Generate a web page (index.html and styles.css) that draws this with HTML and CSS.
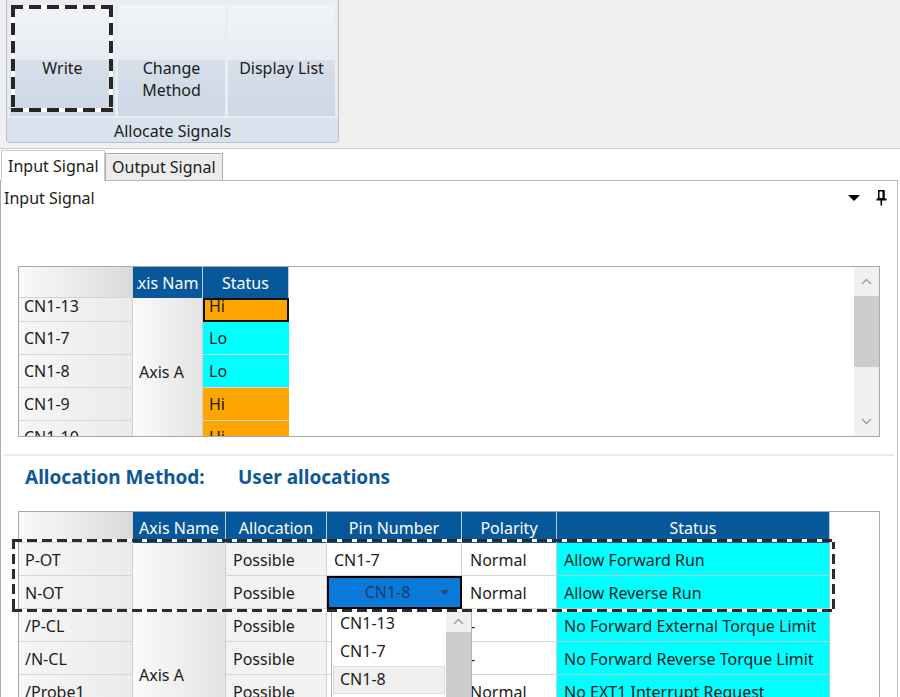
FILE: index.html
```html
<!DOCTYPE html>
<html>
<head>
<meta charset="utf-8">
<link rel="stylesheet" href="styles.css">
</head>
<body>
<div class="ribbon">
  <div class="group">
    <div class="buttons">
      <div class="btn btn-a focused">Write</div>
      <div class="btn">Change<br>Method</div>
      <div class="btn">Display List</div>
    </div>
    <div class="group-label">Allocate Signals</div>
  </div>
</div>

<div class="tabs">
  <div class="tab active">Input Signal</div>
  <div class="tab">Output Signal</div>
</div>

<div class="panel">
  <div class="ptitle">
    <span>Input Signal</span>
    <span class="tools">
      <svg class="tri" width="12" height="7" viewBox="0 0 12 7"><polygon points="0,0 12,0 6,6" fill="#000"/></svg>
      <svg class="pin" width="11" height="16" viewBox="0 0 11 16">
        <rect x="2.75" y="0.75" width="5" height="8" fill="none" stroke="#000" stroke-width="1.5"/>
        <rect x="6.5" y="0" width="2" height="9" fill="#000"/>
        <rect x="0.5" y="8.5" width="10" height="2" fill="#000"/>
        <rect x="4.5" y="10" width="1.6" height="5.5" fill="#000"/>
      </svg>
    </span>
  </div>

  <div class="grid1">
    <div class="g1-main">
      <div class="g1-head">
        <div class="corner"></div>
        <div class="hcell"><div class="clipbox"><span>Axis Name</span></div></div>
        <div class="hcell">Status</div>
      </div>
      <div class="g1-body">
        <div class="g1-grid">
          <div class="rh c1 first"><span>CN1-13</span></div>
          <div class="axis a5">Axis A</div>
          <div class="st c3 hi sel first"><span>Hi</span></div>
          <div class="rh c1"><span>CN1-7</span></div>
          <div class="st c3 lo"><span>Lo</span></div>
          <div class="rh c1"><span>CN1-8</span></div>
          <div class="st c3 lo"><span>Lo</span></div>
          <div class="rh c1"><span>CN1-9</span></div>
          <div class="st c3 hi"><span>Hi</span></div>
          <div class="rh c1"><span>CN1-10</span></div>
          <div class="st c3 hi"><span>Hi</span></div>
        </div>
      </div>
    </div>
    <div class="vscroll">
      <div class="sb-btn"><svg width="11" height="7" viewBox="0 0 11 7"><polyline points="1,6 5.5,1.5 10,6" fill="none" stroke="#9c9c9c" stroke-width="1.4"/></svg></div>
      <div class="sb-thumb"></div>
      <div class="sb-track"></div>
      <div class="sb-btn"><svg width="11" height="7" viewBox="0 0 11 7"><polyline points="1,1 5.5,5.5 10,1" fill="none" stroke="#9c9c9c" stroke-width="1.4"/></svg></div>
    </div>
  </div>

  <div class="sep"></div>

  <div class="method"><span class="m-label">Allocation Method:</span><span>User allocations</span></div>

  <div class="grid2">
    <div class="g2">
      <div class="corner"></div>
      <div class="hcell">Axis Name</div>
      <div class="hcell">Allocation</div>
      <div class="hcell">Pin Number</div>
      <div class="hcell">Polarity</div>
      <div class="hcell">Status</div>

      <div class="rh k1">P-OT</div>
      <div class="axis a8">Axis A</div>
      <div class="cell alloc k3">Possible</div>
      <div class="cell pinc k4">CN1-7</div>
      <div class="cell pol k5">Normal</div>
      <div class="cell stc k6">Allow Forward Run</div>

      <div class="rh k1">N-OT</div>
      <div class="cell alloc k3">Possible</div>
      <div class="cell pinc k4 edit"><span class="edit-val">CN1-8</span><svg class="edit-arrow" width="9" height="5" viewBox="0 0 9 5"><polygon points="0,0 9,0 4.5,5" fill="#1f4e86"/></svg></div>
      <div class="cell pol k5">Normal</div>
      <div class="cell stc k6">Allow Reverse Run</div>

      <div class="rh k1">/P-CL</div>
      <div class="cell alloc k3">Possible</div>
      <div class="cell pinc k4"></div>
      <div class="cell pol k5">-</div>
      <div class="cell stc k6">No Forward External Torque Limit</div>

      <div class="rh k1">/N-CL</div>
      <div class="cell alloc k3">Possible</div>
      <div class="cell pinc k4"></div>
      <div class="cell pol k5">-</div>
      <div class="cell stc k6">No Forward Reverse Torque Limit</div>

      <div class="rh k1">/Probe1</div>
      <div class="cell alloc k3">Possible</div>
      <div class="cell pinc k4"></div>
      <div class="cell pol k5">Normal</div>
      <div class="cell stc k6">No EXT1 Interrupt Request</div>
    </div>

    <div class="dropdown">
      <div class="dd-items">
        <div class="dd-item">CN1-13</div>
        <div class="dd-item">CN1-7</div>
        <div class="dd-item hl">CN1-8</div>
      </div>
      <div class="dd-scroll">
        <div class="dd-up"><svg width="11" height="7" viewBox="0 0 11 7"><polyline points="1,6 5.5,1.5 10,6" fill="none" stroke="#9c9c9c" stroke-width="1.4"/></svg></div>
        <div class="dd-thumb"></div>
      </div>
    </div>

    <div class="dash row-focus"></div>
  </div>
</div>
</body>
</html>
```

FILE: styles.css
```css
* { box-sizing: border-box; }

html, body {
  margin: 0;
  height: 697px;
  overflow: hidden;
  background: #fff;
  font-family: "Noto Sans", "Open Sans", sans-serif;
  font-size: 16px;
  color: #1b1b1b;
}

/* ---------- Ribbon ---------- */
.ribbon {
  height: 149px;
  background: #f0f0f0;
  border-bottom: 1px solid #cbcbcb;
}
.group {
  margin-left: 6px;
  width: 333px;
  height: 143px;
  border: 1px solid #b6c0cc;
  border-top: none;
  border-radius: 0 0 4px 4px;
  background: #e9edf2;
  display: flex;
  flex-direction: column;
}
.buttons {
  display: flex;
  gap: 3px;
  padding: 5px 0 0 3px;
  height: 116px;
}
.btn {
  position: relative;
  width: 107px;
  height: 111px;
  padding-top: 52px;
  line-height: 22px;
  text-align: center;
  background: linear-gradient(to bottom, #f1f3f7 0%, #e8ecf2 50%, #d6dfea 50%, #cdd8e5 100%);
}
.btn-a { width: 105px; }
.focused::after {
  content: "";
  position: absolute;
  left: 1px;
  top: 0;
  right: 2px;
  bottom: 4px;
  background:
    repeating-linear-gradient(90deg, #262626 0 12px, #fff 12px 18px) left top / 100% 4px no-repeat,
    repeating-linear-gradient(90deg, #262626 0 12px, #fff 12px 18px) left bottom / 100% 4px no-repeat,
    repeating-linear-gradient(180deg, #262626 0 12px, #fff 12px 18px) left top / 4px 100% no-repeat,
    repeating-linear-gradient(180deg, #262626 0 12px, #fff 12px 18px) right top / 4px 100% no-repeat;
}
.group-label {
  margin-top: 2px;
  height: 24px;
  line-height: 27px;
  text-align: center;
  background: #d9e2ed;
  border-radius: 0 0 3px 3px;
}

/* ---------- Tabs ---------- */
.tabs {
  width: 898px;
  height: 32px;
  display: flex;
  align-items: flex-end;
  border-bottom: 1px solid #b5b5b5;
}
.tab {
  height: 27px;
  line-height: 26px;
  padding: 0 6px;
  background: #ececec;
  border: 1px solid #adadad;
  border-bottom: none;
  width: 118px;
  white-space: nowrap;
}
.tab.active {
  margin-left: 1px;
  width: 104px;
  height: 31px;
  line-height: 30px;
  margin-bottom: -1px;
  background: #fff;
  border-color: #c9c9c9;
}

/* ---------- Panel ---------- */
.panel {
  width: 898px;
  height: 516px;
  border-left: 1px solid #adadad;
  border-right: 1px solid #c4c4c4;
}
.ptitle {
  height: 33px;
  line-height: 32px;
  padding-left: 3px;
  display: flex;
  justify-content: space-between;
  align-items: center;
}
.tools {
  display: flex;
  align-items: center;
  gap: 16px;
  margin-right: 10px;
}
.tri { margin-top: 2px; }

/* ---------- Upper grid ---------- */
.grid1 {
  margin: 52px 0 0 17px;
  width: 862px;
  height: 171px;
  border: 1px solid #a9a9a9;
  display: flex;
}
.g1-main { flex: 1; }
.g1-head {
  height: 31px;
  display: grid;
  grid-template-columns: 114px 70px 86px;
}
.corner {
  background: linear-gradient(to right, #fafafa, #dadada);
  border-right: 1px solid #cfcfcf;
  border-bottom: 1px solid #d2d2d2;
}
.hcell {
  background: #07589a;
  color: #fff;
  border-right: 1px solid #b8cde0;
  display: flex;
  justify-content: center;
  align-items: center;
  white-space: nowrap;
  overflow: hidden;
  line-height: 30px;
}
.clipbox {
  width: 62px;
  overflow: hidden;
  display: flex;
  justify-content: center;
  flex-shrink: 0;
}
.clipbox span { flex-shrink: 0; }
.g1-body {
  height: 138px;
  overflow: hidden;
}
.g1-grid {
  display: grid;
  grid-template-columns: 114px 70px 86px;
  grid-template-rows: 24px repeat(4, 33px);
}
.c1 { grid-column: 1; }
.c3 { grid-column: 3; }
.rh {
  background: linear-gradient(to right, #f6f6f6, #ebebeb);
  border-right: 1px solid #d0d0d0;
  border-bottom: 1px solid #d6d6d6;
  padding-left: 5px;
  line-height: 32px;
  overflow: hidden;
  white-space: nowrap;
}
.rh span, .st span { display: block; }
.first span { margin-top: -8px; }
.axis {
  grid-column: 2;
  background: linear-gradient(to right, #fbfbfb, #e3e3e3);
  border-right: 1px solid #d0d0d0;
  display: flex;
  align-items: center;
  padding-left: 6px;
}
.a5 { grid-row: 1 / span 5; padding-bottom: 8px; }
.st {
  line-height: 32px;
  padding-left: 6px;
  overflow: hidden;
  border-bottom: 1px solid #d8d8d8;
  position: relative;
}
.hi { background: #ffa500; }
.lo { background: #00ffff; }
.sel { outline: 2px solid #111; outline-offset: -2px; }

.vscroll {
  width: 25px;
  background: #f0f0f0;
  display: flex;
  flex-direction: column;
}
.sb-btn {
  height: 29px;
  display: flex;
  align-items: center;
  justify-content: center;
}
.sb-thumb { height: 71px; background: #cdcdcd; }
.sb-track { flex: 1; }

.sep {
  margin: 17px 3px 0 2px;
  height: 2px;
  background: #ebebeb;
}

/* ---------- Method heading ---------- */
.method {
  margin-top: 9px;
  padding-left: 24px;
  line-height: 24px;
  font-size: 19px;
  font-weight: 700;
  color: #0b5798;
  white-space: nowrap;
}
.m-label { display: inline-block; width: 213px; }

/* ---------- Lower grid ---------- */
.grid2 {
  position: relative;
  margin: 22px 0 0 17px;
  width: 862px;
  height: 300px;
  border: 1px solid #a9a9a9;
  border-bottom: none;
}
.g2 {
  display: grid;
  grid-template-columns: 114px 93px 101px 135px 95px 273px;
  grid-template-rows: 31px repeat(8, 33px);
}
.k1 { grid-column: 1; }
.k3 { grid-column: 3; }
.k4 { grid-column: 4; }
.k5 { grid-column: 5; }
.k6 { grid-column: 6; }
.a8 { grid-row: 2 / span 8; }
.g2 .rh { padding-left: 6px; line-height: 34px; }
.cell {
  line-height: 34px;
  padding-left: 7px;
  border-right: 1px solid #d0d0d0;
  border-bottom: 1px solid #d6d6d6;
  white-space: nowrap;
  overflow: hidden;
}
.alloc { background: #f2f2f2; }
.pinc { background: #fff; }
.pol { background: #fff; padding-left: 8px; }
.stc {
  background: #00ffff;
  border-right-color: #b9c9c9;
  border-bottom-color: #b6cccc;
}
.edit {
  background: #0a79d8;
  outline: 2px solid #000;
  outline-offset: -2px;
  display: flex;
  align-items: center;
  padding-left: 0;
  color: #1b3e6b;
}
.edit-val { flex: 1; text-align: center; padding-left: 8px; }
.edit-arrow { margin-right: 12px; }

/* dropdown list */
.dropdown {
  position: absolute;
  left: 312px;
  top: 97px;
  width: 141px;
  height: 120px;
  background: #fff;
  border: 1px solid #b4b4b4;
  display: flex;
}
.dd-items {
  width: 114px;
  padding: 0 1px;
}
.dd-item {
  height: 28px;
  line-height: 27px;
  padding-left: 7px;
  color: #1c1c1c;
}
.dd-item:first-child { margin-top: 1px; height: 27px; line-height: 24px; }
.dd-item.hl {
  background: #f0f0f0;
  border: 1px solid #dcdcdc;
  padding-left: 6px;
  line-height: 25px;
}
.dd-scroll {
  flex: 1;
  background: #f0f0f0;
  display: flex;
  flex-direction: column;
}
.dd-up {
  height: 22px;
  display: flex;
  align-items: center;
  justify-content: center;
}
.dd-thumb { flex: 1; background: #cdcdcd; }

/* dashed focus around rows */
.dash {
  position: absolute;
  background:
    repeating-linear-gradient(90deg, #2b2b2b 0 10px, #fff 10px 15px) left top / 100% 3px no-repeat,
    repeating-linear-gradient(90deg, #2b2b2b 0 10px, #fff 10px 15px) left bottom / 100% 3px no-repeat,
    repeating-linear-gradient(180deg, #2b2b2b 0 10px, #fff 10px 15px) left top / 3px 100% no-repeat,
    repeating-linear-gradient(180deg, #2b2b2b 0 10px, #fff 10px 15px) right top / 3px 100% no-repeat;
}
.row-focus {
  left: -7px;
  top: 27px;
  width: 823px;
  height: 73px;
}
```
